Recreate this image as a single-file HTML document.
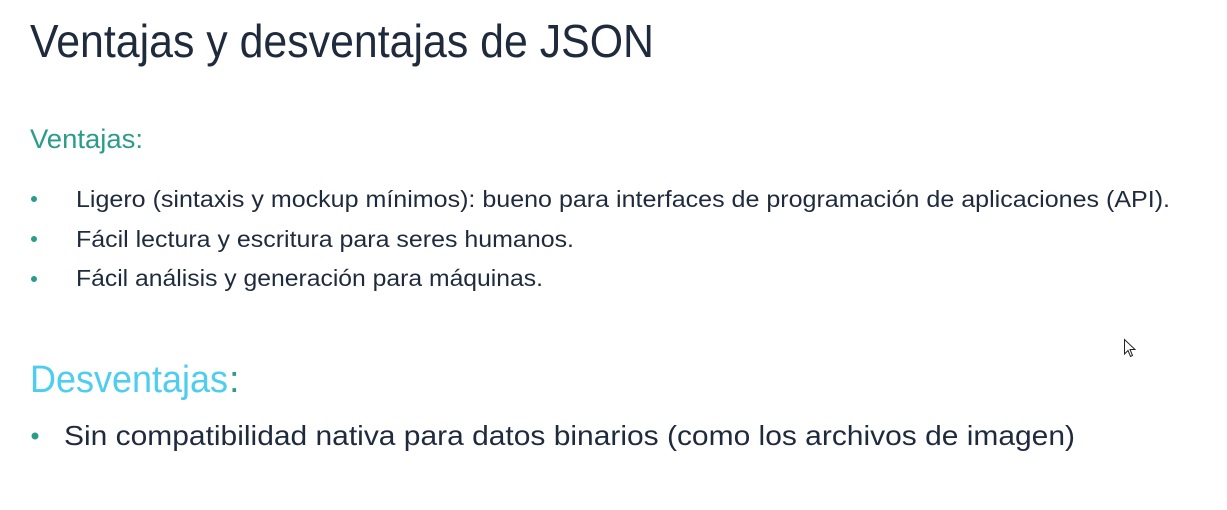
<!DOCTYPE html>
<html><head><meta charset="utf-8"><style>
html,body{margin:0;padding:0;background:#fff;width:1227px;height:510px;overflow:hidden}
svg{display:block}
text{font-family:"Liberation Sans",sans-serif}
</style></head><body>
<svg width="1227" height="510" viewBox="0 0 1227 510" xmlns="http://www.w3.org/2000/svg">
<text x="30" y="57" font-size="46" fill="#1f2b3d" textLength="624" lengthAdjust="spacingAndGlyphs">Ventajas y desventajas de JSON</text>
<text x="30" y="148" font-size="27" fill="#2a9d8a" textLength="113" lengthAdjust="spacingAndGlyphs">Ventajas:</text>
<g fill="#2a9d8a"><circle cx="34" cy="199" r="3"/><circle cx="34" cy="239" r="3"/><circle cx="34" cy="279" r="3"/><circle cx="35" cy="436" r="3.5"/></g>
<g font-size="23" fill="#1f2b3d">
<text x="76" y="207" textLength="1094" lengthAdjust="spacingAndGlyphs">Ligero (sintaxis y mockup mínimos): bueno para interfaces de programación de aplicaciones (API).</text>
<text x="76" y="247" textLength="498" lengthAdjust="spacingAndGlyphs">Fácil lectura y escritura para seres humanos.</text>
<text x="76" y="286" textLength="467" lengthAdjust="spacingAndGlyphs">Fácil análisis y generación para máquinas.</text>
</g>
<text x="30" y="392" font-size="38" fill="#4dcdf0" textLength="198" lengthAdjust="spacingAndGlyphs">Desventajas</text>
<text x="229" y="392" font-size="38" fill="#2a9d8a">:</text>
<text x="64" y="445" font-size="28" fill="#1f2b3d" textLength="1011" lengthAdjust="spacingAndGlyphs">Sin compatibilidad nativa para datos binarios (como los archivos de imagen)</text>
<path d="M1124.5 339.5 L1124.5 354 L1128 350.5 L1130.5 356.5 L1132.5 355.5 L1130 349.5 L1135 349.5 Z" fill="#fff" stroke="#222" stroke-width="1"/>
</svg>
</body></html>
